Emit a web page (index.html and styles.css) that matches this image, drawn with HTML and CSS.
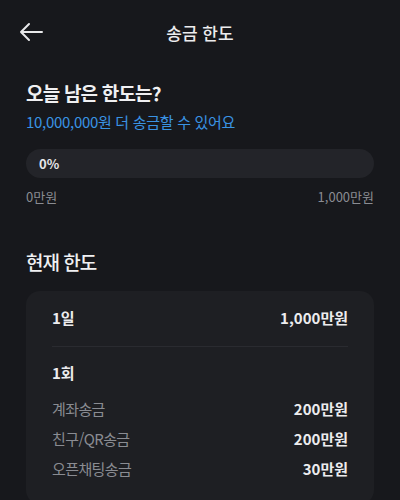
FILE: index.html
```html
<!DOCTYPE html>
<html lang="ko">
<head>
<meta charset="utf-8">
<link rel="stylesheet" href="styles.css">
</head>
<body>
<div class="screen">
  <header class="topbar">
    <svg class="back" width="24" height="20" viewBox="0 0 24 20" fill="none" stroke="#e8e8ea" stroke-width="2" stroke-linecap="round" stroke-linejoin="round"><path d="M23 10H2M10 2L2 10l8 8"/></svg>
    <h1 class="title">송금 한도</h1>
  </header>

  <section class="today">
    <h2 class="heading">오늘 남은 한도는?</h2>
    <p class="remain">10,000,000원 더 송금할 수 있어요</p>
    <div class="bar"><span class="pct">0%</span></div>
    <div class="scale"><span>0만원</span><span>1,000만원</span></div>
  </section>

  <section class="current">
    <h2 class="heading2">현재 한도</h2>
    <div class="card">
      <div class="row strong"><span>1일</span><span>1,000만원</span></div>
      <div class="divider"></div>
      <div class="row strong once"><span>1회</span></div>
      <div class="row sub"><span class="label">계좌송금</span><span>200만원</span></div>
      <div class="row sub"><span class="label">친구/QR송금</span><span>200만원</span></div>
      <div class="row sub"><span class="label">오픈채팅송금</span><span>30만원</span></div>
    </div>
  </section>
</div>
</body>
</html>
```
FILE: styles.css
```css
html, body {
  margin: 0;
  padding: 0;
  background: #17181c;
}
body {
  font-family: "Noto Sans CJK KR", "Noto Sans", sans-serif;
  color: #e9e9eb;
  width: 400px;
  height: 500px;
  overflow: hidden;
}
.screen {
  padding: 0 26px;
}
.topbar {
  position: relative;
  height: 64px;
  display: flex;
  align-items: center;
  justify-content: center;
}
.back {
  position: absolute;
  left: -7px;
  top: 22px;
}
.title {
  margin: 0;
  font-size: 17px;
  font-weight: 500;
  color: #ececee;
}
.today {
  padding-top: 15px;
}
.heading {
  margin: 0;
  font-size: 19px;
  font-weight: 700;
  line-height: 28px;
  letter-spacing: -0.8px;
  color: #f0f0f2;
}
.remain {
  margin: 4px 0 0;
  font-size: 15px;
  line-height: 22px;
  letter-spacing: -0.3px;
  color: #3a93e3;
}
.bar {
  margin-top: 16px;
  height: 29px;
  border-radius: 15px;
  background: #232429;
  display: flex;
  align-items: center;
  padding-left: 13px;
}
.pct {
  font-size: 13px;
  font-weight: 700;
  color: #e6e6e8;
}
.scale {
  margin-top: 9px;
  display: flex;
  justify-content: space-between;
  font-size: 13px;
  line-height: 20px;
  color: #8a8c92;
}
.current {
  padding-top: 42px;
}
.heading2 {
  margin: 0;
  font-size: 19px;
  font-weight: 500;
  line-height: 26px;
  letter-spacing: -1px;
  color: #f0f0f2;
}
.card {
  margin-top: 16px;
  background: #1e1f23;
  border-radius: 14px;
  padding: 16px 26px 20px;
}
.row {
  display: flex;
  justify-content: space-between;
  align-items: center;
  font-size: 15px;
  line-height: 22px;
}
.strong {
  font-weight: 700;
  color: #ececee;
}
.divider {
  height: 1px;
  background: #2a2b30;
  margin: 17px 0 15px;
}
.once {
  margin-bottom: 10px;
}
.sub {
  font-weight: 700;
  color: #ececee;
  height: 30px;
}
.sub .label {
  font-weight: 400;
  letter-spacing: -0.6px;
  color: #8a8c92;
}
```
